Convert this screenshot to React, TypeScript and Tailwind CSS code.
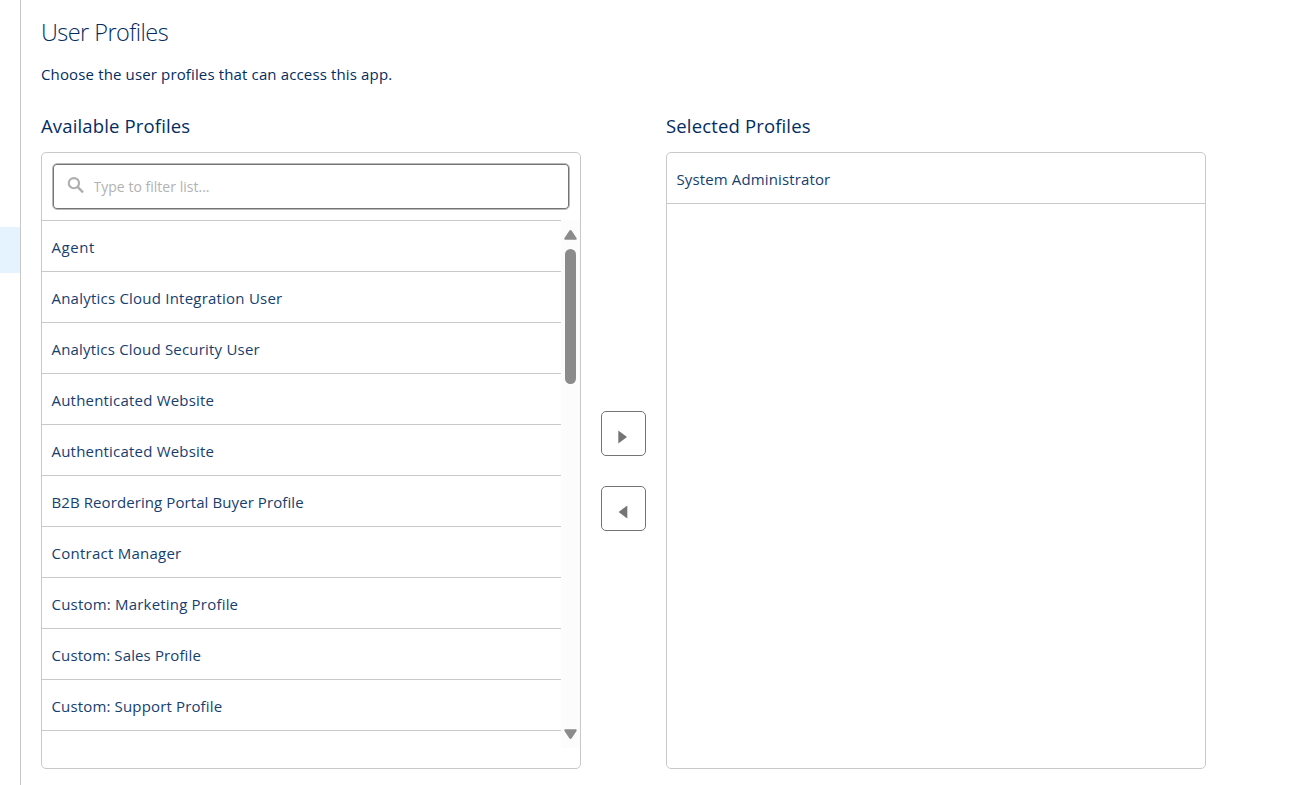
const available = [
  { name: "Agent", tracking: "tracking-[0.55px]" },
  { name: "Analytics Cloud Integration User", tracking: "tracking-[0.22px]" },
  { name: "Analytics Cloud Security User", tracking: "tracking-[0.2px]" },
  { name: "Authenticated Website", tracking: "tracking-[0.2px]" },
  { name: "Authenticated Website", tracking: "tracking-[0.2px]" },
  { name: "B2B Reordering Portal Buyer Profile", tracking: "tracking-[0.09px]" },
  { name: "Contract Manager", tracking: "tracking-[0.25px]" },
  { name: "Custom: Marketing Profile", tracking: "tracking-[0.2px]" },
  { name: "Custom: Sales Profile", tracking: "tracking-[0.12px]" },
  { name: "Custom: Support Profile", tracking: "tracking-[0.15px]" },
];

function Row({ name, tracking }: { name: string; tracking: string }) {
  return (
    <li className={`h-[51px] border-b border-[#c9c9c9] pl-[9.5px] pt-[3px] text-[15px] leading-[47px] text-[#163e6e] ${tracking}`}>
      {name}
    </li>
  );
}

function SearchIcon() {
  return (
    <svg width="17" height="17" viewBox="0 0 17 17" fill="none" stroke="#aeaeae" className="mb-[3px] ml-3.5">
      <circle cx="6.9" cy="6.2" r="5.1" strokeWidth="2.1" />
      <path d="M10.8 10.1 16 15.3" strokeWidth="2.4" />
    </svg>
  );
}

function Scrollbar() {
  return (
    <div className="flex h-[528px] w-[19px] flex-col items-center bg-[#fcfcfc] pt-2.5">
      <svg width="13" height="10" viewBox="0 0 13 10" fill="#8b8b8b">
        <path d="M5.3.8a1.4 1.4 0 0 1 2.4 0l4.8 7.3c.5.8 0 1.7-.9 1.7H1.4C.5 9.8 0 8.9.5 8.1z" />
      </svg>
      <div className="mt-[9px] h-[135px] w-[11px] rounded-full bg-[#8b8b8b]" />
      <svg width="13" height="10" viewBox="0 0 13 10" fill="#8b8b8b" className="mt-auto mb-[9px]">
        <path d="M5.3 9.2a1.4 1.4 0 0 0 2.4 0l4.8-7.3c.5-.8 0-1.7-.9-1.7H1.4C.5.2 0 1.1.5 1.9z" />
      </svg>
    </div>
  );
}

function MoveButton({ label, points }: { label: string; points: string }) {
  return (
    <button aria-label={label} className="flex size-[45px] items-center justify-center rounded-[5px] border border-[#747474] bg-white pt-[7px] pr-px">
      <svg width="10" height="14" viewBox="0 0 10 14" fill="#747474">
        <polygon points={points} />
      </svg>
    </button>
  );
}

export default function App() {
  return (
    <div className="flex h-[785px] w-full overflow-hidden bg-white font-['Open_Sans','Noto_Sans',sans-serif] text-[#032d60]">
      <aside className="w-[21px] shrink-0 border-r border-[#c9c9c9] pt-[227px]">
        <div className="h-[46px] bg-[#e5f3fe]" />
      </aside>
      <main className="pl-5 pt-4">
        <h1 className="h-8 text-[23.5px] font-light leading-8 tracking-[-0.55px]">User Profiles</h1>
        <p className="mt-3.5 h-6 text-[15px] leading-6 tracking-[0.14px]">
          Choose the user profiles that can access this app.
        </p>
        <div className="mt-[26px] flex">
          <section className="w-[540px]">
            <h2 className="h-7 text-[18.5px] leading-7 tracking-[0.15px]">Available Profiles</h2>
            <div className="mt-3 h-[617px] rounded-[5px] border border-[#c9c9c9]">
              <div className="px-2.5 pt-2.5">
                <label className="flex h-[47px] items-center rounded-[5px] border border-[#bababa] shadow-[inset_0_0_0_1px_#747474]">
                  <SearchIcon />
                  <input
                    placeholder="Type to filter list..."
                    className="ml-[9.5px] w-80 text-[14px] tracking-[0.02px] outline-none placeholder:text-[#b2b2b2]"
                  />
                </label>
              </div>
              <div className="mt-2.5 flex">
                <ul className="w-[519px] border-t border-[#c9c9c9]">
                  {available.map((p, i) => (
                    <Row key={i} name={p.name} tracking={p.tracking} />
                  ))}
                </ul>
                <Scrollbar />
              </div>
            </div>
          </section>
          <div className="flex w-[85px] flex-col items-center gap-[30px] pt-[299px]">
            <MoveButton label="Add profile" points="0.3,0.5 9,7 0.3,13.5" />
            <MoveButton label="Remove profile" points="9.3,0.5 0.6,7 9.3,13.5" />
          </div>
          <section className="w-[540px]">
            <h2 className="h-7 text-[18.5px] leading-7 tracking-[0.15px]">Selected Profiles</h2>
            <ul className="mt-3 h-[617px] rounded-[5px] border border-[#c9c9c9]">
              <Row name="System Administrator" tracking="tracking-[0.13px]" />
            </ul>
          </section>
        </div>
      </main>
    </div>
  );
}
